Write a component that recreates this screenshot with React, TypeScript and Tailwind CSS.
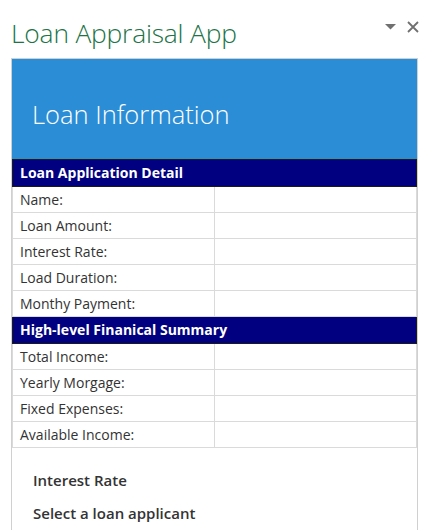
import React from 'react';

const loanRows = ['Name:', 'Loan Amount:', 'Interest Rate:', 'Load Duration:', 'Monthy Payment:'];
const summaryRows = ['Total Income:', 'Yearly Morgage:', 'Fixed Expenses:', 'Available Income:'];

const SectionHeader = ({ title }: { title: string }) => (
  <tr>
    <td
      colSpan={2}
      className="h-[27px] bg-[#000080] border border-[#1a1a1a] px-[7px] text-[14px] font-bold text-white leading-none"
    >
      {title}
    </td>
  </tr>
);

const FieldRow = ({ label }: { label: string }) => (
  <tr>
    <td className="h-[26px] w-[202px] border border-[#dadada] px-[7px] text-[14px] text-[#333333] leading-none">
      {label}
    </td>
    <td className="h-[26px] border border-[#dadada]"></td>
  </tr>
);

export default function App() {
  return (
    <div
      className="w-[431px] h-[530px] overflow-hidden bg-white"
      style={{ fontFamily: '"Open Sans", "Noto Sans", sans-serif' }}
    >
      {/* Cabeçalho do painel */}
      <div className="h-[58px] flex items-start justify-between pl-[11px] pr-[12px] pt-[15px]">
        <h1 className="text-[26.4px] font-light text-[#217346] leading-[36px] tracking-[-0.2px]">Loan Appraisal App</h1>
        <div className="flex items-center gap-[11px] pt-[6px] text-[#707070]">
          <svg width="11" height="6" viewBox="0 0 11 6">
            <path d="M0 0 L11 0 L5.5 5.5 Z" fill="#707070" />
          </svg>
          <svg width="12" height="12" viewBox="0 0 12 12">
            <path d="M1 1 L11 11 M11 1 L1 11" stroke="#707070" strokeWidth="1.8" />
          </svg>
        </div>
      </div>

      {/* Conteúdo */}
      <div className="ml-[11px] w-[407px] h-[472px] border-t border-x border-[#d0d0d0] overflow-hidden">
        <div className="h-[100px] bg-[#2b8dd6] flex items-center pl-[20px] pt-[11px]">
          <h2 className="text-[25.5px] font-light text-white leading-none">Loan Information</h2>
        </div>

        <table className="w-[405px] border-collapse">
          <tbody>
            <SectionHeader title="Loan Application Detail" />
            {loanRows.map((r) => (
              <FieldRow key={r} label={r} />
            ))}
            <SectionHeader title="High-level Finanical Summary" />
            {summaryRows.map((r) => (
              <FieldRow key={r} label={r} />
            ))}
          </tbody>
        </table>

        <div className="pl-[21px] pt-[22px] flex flex-col gap-[12px] text-[15px] font-semibold text-[#333333]">
          <p className="leading-[21px]">Interest Rate</p>
          <p className="leading-[21px]">Select a loan applicant</p>
        </div>
      </div>
    </div>
  );
}
